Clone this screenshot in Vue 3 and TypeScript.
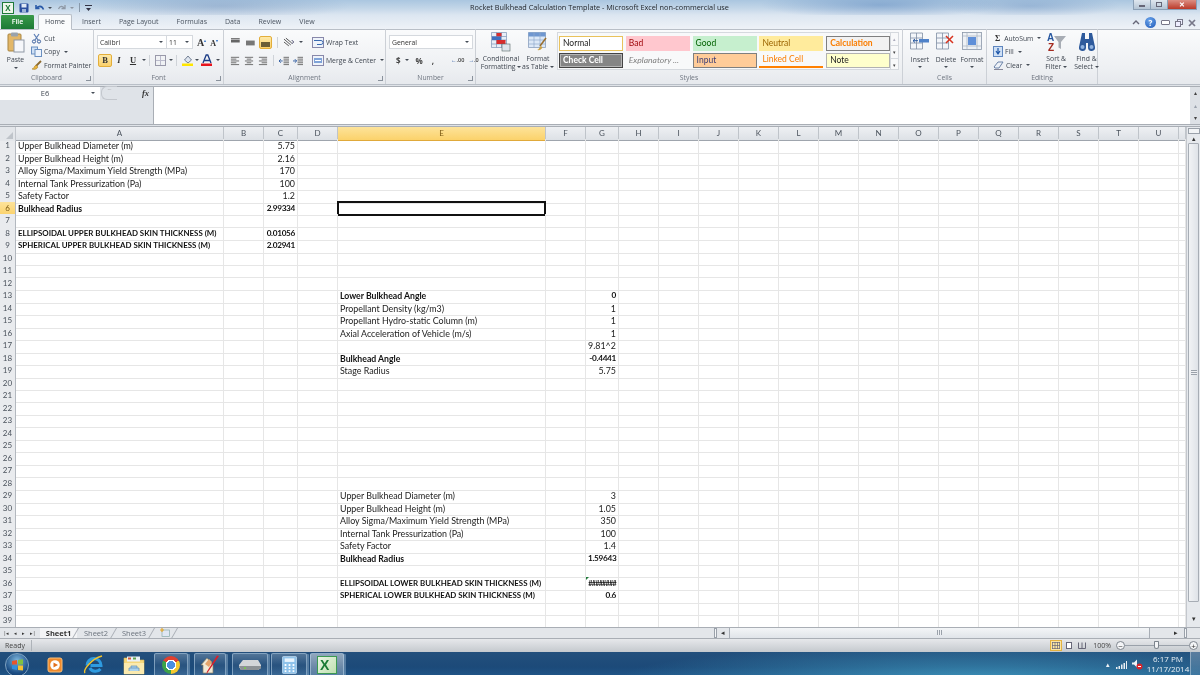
<script setup lang="ts">
const columns = ['A', 'B', 'C', 'D', 'E', 'F', 'G', 'H', 'I', 'J', 'K', 'L', 'M', 'N', 'O', 'P', 'Q', 'R', 'S', 'T', 'U', '']
const rows = Array.from({ length: 39 }, (_, i) => i + 1)
const boldRows = [6, 8, 9, 13, 18, 34, 36, 37]
const capsRows = [8, 9, 36, 37]

const data: Record<string, string> = {
  A1: 'Upper Bulkhead Diameter (m)', C1: '5.75',
  A2: 'Upper Bulkhead Height (m)', C2: '2.16',
  A3: 'Alloy Sigma/Maximum Yield Strength (MPa)', C3: '170',
  A4: 'Internal Tank Pressurization (Pa)', C4: '100',
  A5: 'Safety Factor', C5: '1.2',
  A6: 'Bulkhead Radius', C6: '2.99334',
  A8: 'ELLIPSOIDAL UPPER BULKHEAD SKIN THICKNESS (M)', C8: '0.01056',
  A9: 'SPHERICAL UPPER BULKHEAD SKIN THICKNESS (M)', C9: '2.02941',
  E13: 'Lower Bulkhead Angle', G13: '0',
  E14: 'Propellant Density (kg/m3)', G14: '1',
  E15: 'Propellant Hydro-static Column (m)', G15: '1',
  E16: 'Axial Acceleration of Vehicle (m/s)', G16: '1',
  G17: '9.81^2',
  E18: 'Bulkhead Angle', G18: '-0.4441',
  E19: 'Stage Radius', G19: '5.75',
  E29: 'Upper Bulkhead Diameter (m)', G29: '3',
  E30: 'Upper Bulkhead Height (m)', G30: '1.05',
  E31: 'Alloy Sigma/Maximum Yield Strength (MPa)', G31: '350',
  E32: 'Internal Tank Pressurization (Pa)', G32: '100',
  E33: 'Safety Factor', G33: '1.4',
  E34: 'Bulkhead Radius', G34: '1.59643',
  E36: 'ELLIPSOIDAL LOWER BULKHEAD SKIN THICKNESS (M)', G36: '########',
  E37: 'SPHERICAL LOWER BULKHEAD SKIN THICKNESS (M)', G37: '0.6',
}

function cellClass(col: string, row: number) {
  const key = col + row
  return {
    bold: boldRows.includes(row),
    caps: capsRows.includes(row) && (col === 'A' || col === 'E'),
    right: (col === 'C' || col === 'G') && key !== 'G17',
    selected: key === 'E6',
    flagged: key === 'G36',
  }
}

const tabs = ['Insert', 'Page Layout', 'Formulas', 'Data', 'Review', 'View']
const styleCells = [
  { name: 'Normal', cls: 'st-normal' },
  { name: 'Bad', cls: 'st-bad' },
  { name: 'Good', cls: 'st-good' },
  { name: 'Neutral', cls: 'st-neutral' },
  { name: 'Calculation', cls: 'st-calc' },
  { name: 'Check Cell', cls: 'st-check' },
  { name: 'Explanatory ...', cls: 'st-expl' },
  { name: 'Input', cls: 'st-input' },
  { name: 'Linked Cell', cls: 'st-linked' },
  { name: 'Note', cls: 'st-note' },
]
</script>

<template>
  <div class="window">
    <!-- title bar -->
    <div class="titlebar">
      <div class="qat">
        <span class="xl-mini">X</span>
        <svg width="10" height="10" viewBox="0 0 10 10"><rect x=".5" y=".5" width="9" height="9" rx="1" fill="#2b4f9e" /><rect x="2.5" y="1" width="5" height="3.5" fill="#dfe8f5" /><rect x="3" y="6" width="4" height="3.5" fill="#9db4d8" /></svg>
        <svg width="11" height="10" viewBox="0 0 11 10"><path d="M2 2v3.5h3.5M2.5 5.500C4 2.500 8 2.500 9.500 6.500" fill="none" stroke="#2a5aa8" stroke-width="1.600" /></svg>
        <i class="caret dark"></i>
        <svg width="10" height="10" viewBox="0 0 10 10"><path d="M8 2v3.500H4.500M7.500 5.500C6 2.500 3 2.500 1.500 6" fill="none" stroke="#8e98a5" stroke-width="1.300" /></svg>
        <i class="caret"></i>
        <span class="qat-sep"></span>
        <svg width="7" height="8" viewBox="0 0 7 8"><rect y="1" width="7" height="1" fill="#334" /><path d="M1 4h5L3.500 7z" fill="#334" /></svg>
      </div>
      <div class="title">Rocket Bulkhead Calculation Template - Microsoft Excel non-commercial use</div>
      <div class="winctl">
        <span class="wc"><i class="wc-min"></i></span>
        <span class="wc"><i class="wc-max"></i></span>
        <span class="wc wc-close">✕</span>
      </div>
    </div>

    <!-- ribbon tabs -->
    <div class="tabs">
      <div class="tab-file">File</div>
      <div class="tab-home">Home</div>
      <div v-for="t in tabs" :key="t" class="tab">{{ t }}</div>
      <div class="help">
        <svg width="8" height="7" viewBox="0 0 8 7"><path d="M1 5l3-3 3 3" fill="none" stroke="#667" stroke-width="1.400" /></svg>
        <span class="help-q">?</span>
        <i class="mdi-min"></i>
        <svg width="8" height="8" viewBox="0 0 8 8"><rect x="2.500" y=".5" width="5" height="5" fill="#eef" stroke="#778" /><rect x=".5" y="2.500" width="5" height="5" fill="#eef" stroke="#778" /></svg>
        <svg width="8" height="8" viewBox="0 0 8 8"><path d="M1 1l6 6M7 1L1 7" stroke="#778" stroke-width="1.700" /></svg>
      </div>
    </div>

    <!-- ribbon -->
    <div class="ribbon">
      <section class="group g-clip">
        <div class="body">
          <div class="big paste">
            <svg width="18" height="21" viewBox="0 0 18 21"><rect x="1" y="2" width="13" height="17" rx="1" fill="#e3b768" stroke="#a98540" /><rect x="4" y=".5" width="7" height="4" rx="1" fill="#9aa3ad" /><rect x="7" y="8" width="10" height="12" fill="#f6f7fa" stroke="#8f98a5" /></svg>
            <span>Paste</span>
            <i class="caret dark"></i>
          </div>
          <div class="stack">
            <div class="small">
              <svg width="11" height="11" viewBox="0 0 11 11"><path d="M3 1l4 6M8 1L4 7" stroke="#5d7fb5" stroke-width="1.200" /><circle cx="3" cy="8.500" r="1.600" fill="none" stroke="#3a5f9c" /><circle cx="8" cy="8.500" r="1.600" fill="none" stroke="#3a5f9c" /></svg>
              Cut
            </div>
            <div class="small">
              <svg width="11" height="11" viewBox="0 0 11 11"><rect x=".5" y="1" width="6" height="7" fill="#cfe0f5" stroke="#6a8fc0" /><rect x="4" y="3.500" width="6.500" height="7" fill="#eef4fc" stroke="#6a8fc0" /></svg>
              Copy <i class="caret dark"></i>
            </div>
            <div class="small">
              <svg width="11" height="11" viewBox="0 0 11 11"><path d="M5 6l5-5" stroke="#8d6a2f" stroke-width="1.800" /><path d="M1 9c2 0 2-3 4-4l2 2c-1 2-3 3-6 2z" fill="#e8b33f" stroke="#9b7620" stroke-width=".5" /></svg>
              Format Painter
            </div>
          </div>
        </div>
        <div class="label">Clipboard<i class="launcher"></i></div>
      </section>

      <section class="group g-font">
        <div class="body col">
          <div class="line">
            <div class="select font-name">Calibri<i class="caret dark"></i></div>
            <div class="select font-size">11<i class="caret dark"></i></div>
            <span class="grow-a">A<sup>▴</sup></span>
            <span class="grow-a small-a">A<sup>▾</sup></span>
          </div>
          <div class="line tight">
            <span class="fb active"><b>B</b></span>
            <span class="fb"><b><em>I</em></b></span>
            <span class="fb"><b><u>U</u></b></span><i class="caret dark c2"></i>
            <span class="vsep"></span>
            <svg width="11" height="11" viewBox="0 0 11 11"><rect x=".5" y=".5" width="10" height="10" fill="none" stroke="#99a" /><path d="M5.500 1v9M1 5.500h9" stroke="#bbc" /></svg>
            <i class="caret dark c3"></i>
            <span class="vsep"></span>
            <svg width="12" height="12" viewBox="0 0 12 12"><path d="M2.500 6l3.500-4 3.500 4-3.500 3z" fill="#dfe6f0" stroke="#56657c" stroke-width=".8" /><rect y="9.500" width="11" height="2.500" fill="#ffe600" /></svg>
            <i class="caret dark c1"></i>
            <svg width="12" height="12" viewBox="0 0 12 12"><path d="M2 9l3.200-8h1.600L10 9M3.500 6.500h5" fill="none" stroke="#1b3c86" stroke-width="1.300" /><rect y="9.500" width="11" height="2.500" fill="#e8141c" /></svg>
            <i class="caret dark c3"></i>
          </div>
        </div>
        <div class="label">Font<i class="launcher"></i></div>
      </section>

      <section class="group g-align">
        <div class="body">
          <div class="align-left col">
            <div class="line icons">
              <svg width="11" height="11" viewBox="0 0 11 11"><path d="M1 1.500h9" stroke="#666" /><path d="M1 2.500h9v3H1z" fill="#666" /></svg>
              <svg width="11" height="11" viewBox="0 0 11 11"><path d="M1 3.500h9v5H1z" fill="#777" /></svg>
              <span class="al-active"><svg width="11" height="11" viewBox="0 0 11 11"><path d="M1 5h9v5H1z" fill="#6b5d35" /></svg></span>
              <span class="vsep"></span>
              <svg width="12" height="11" viewBox="0 0 12 11"><path d="M1 2l7 6M1 5l5 4M3 1l6 5" stroke="#555" /><path d="M9 3l2 2-2 2" fill="none" stroke="#446" /></svg>
              <i class="caret dark"></i>
            </div>
            <div class="line icons">
              <svg width="11" height="11" viewBox="0 0 11 11"><path d="M1 2h9M1 4h6M1 6h9M1 8h6M1 10h9" stroke="#666" /></svg>
              <svg width="11" height="11" viewBox="0 0 11 11"><path d="M1 2h9M3 4h5M1 6h9M3 8h5M1 10h9" stroke="#666" /></svg>
              <svg width="11" height="11" viewBox="0 0 11 11"><path d="M1 2h9M4 4h6M1 6h9M4 8h6M1 10h9" stroke="#666" /></svg>
              <span class="vsep"></span>
              <svg width="11" height="11" viewBox="0 0 11 11"><path d="M5 2h6M5 4h6M5 6h6M5 8h6M5 10h6" stroke="#666" /><path d="M4 6H0M2 4L0 6l2 2" fill="none" stroke="#2c5aa0" /></svg>
              <svg width="11" height="11" viewBox="0 0 11 11"><path d="M5 2h6M5 4h6M5 6h6M5 8h6M5 10h6" stroke="#666" /><path d="M0 6h4M2 4l2 2-2 2" fill="none" stroke="#2c5aa0" /></svg>
            </div>
          </div>
          <div class="align-right col">
            <div class="small">
              <svg width="12" height="11" viewBox="0 0 12 11"><rect x=".5" y=".5" width="11" height="10" fill="#eef3fa" stroke="#88a" /><path d="M2 3.500h7a2 2 0 010 4H5" fill="none" stroke="#3a6ab0" /></svg>
              Wrap Text
            </div>
            <div class="small">
              <svg width="12" height="11" viewBox="0 0 12 11"><rect x=".5" y=".5" width="11" height="10" fill="#eef3fa" stroke="#88a" /><rect x="2" y="3" width="8" height="5" fill="#7fa3d8" /><path d="M3 5.500h6" stroke="#fff" /></svg>
              Merge &amp; Center <i class="caret dark"></i>
            </div>
          </div>
        </div>
        <div class="label">Alignment<i class="launcher"></i></div>
      </section>

      <section class="group g-num">
        <div class="body col">
          <div class="line"><div class="select num-fmt">General<i class="caret dark"></i></div></div>
          <div class="line num-row">
            <b>$</b><i class="caret dark"></i>
            <b class="pct">%</b>
            <b class="comma">,</b>
            <span class="vsep"></span>
            <span class="dec"><em>←</em>.00</span>
            <span class="dec"><em>→</em>.0</span>
          </div>
        </div>
        <div class="label">Number<i class="launcher"></i></div>
      </section>

      <section class="group g-styles">
        <div class="body">
          <div class="big cf">
            <svg width="20" height="20" viewBox="0 0 20 20"><path d="M.5 .5h15v15H.5zM.5 4.500h15M.5 8h15M.5 12h15M5.500 .5v15M10.500 .5v15" fill="#e8eef7" stroke="#7d93b5" stroke-width=".7" /><rect x="5.500" y="1" width="5" height="3.500" fill="#d82c2c" /><rect x="5.500" y="8" width="9" height="4" fill="#d82c2c" /><rect x="1" y="4.500" width="9" height="3.500" fill="#3f6fc0" /><rect x="11" y="12" width="8" height="7" fill="#dfe5ec" stroke="#566" stroke-width=".6" /></svg>
            <span>Conditional<br />Formatting <i class="caret dark"></i></span>
          </div>
          <div class="big ft">
            <svg width="20" height="20" viewBox="0 0 20 20"><path d="M.5 .5h17v15H.5z" fill="#dce8f7" stroke="#7d93b5" stroke-width=".7" /><rect x=".5" y=".5" width="17" height="4" fill="#6f97d0" /><path d="M.5 8h17M.5 12h17M6 .5v15M12 .5v15" stroke="#8fa9cc" stroke-width=".7" /><path d="M18 6l-6 8" stroke="#9a6f30" stroke-width="1.600" /><path d="M9 18c2 0 2-3 4-4l1.500 1.500c-1 2-3 3-5.500 2.500z" fill="#caa044" /></svg>
            <span>Format<br />as Table <i class="caret dark"></i></span>
          </div>
          <div class="gallery">
            <div class="gallery-grid">
              <div v-for="s in styleCells" :key="s.name" class="style-cell" :class="s.cls">{{ s.name }}</div>
            </div>
            <div class="gallery-scroll">
              <span class="off">▴</span><span>▾</span><span class="more">▾</span>
            </div>
          </div>
        </div>
        <div class="label">Styles</div>
      </section>

      <section class="group g-cells">
        <div class="body">
          <div class="big cell-btn">
            <svg width="20" height="18" viewBox="0 0 20 18"><path d="M.5 1h12v16H.5zM.5 6h12M.5 11h12M6.500 1v16" fill="#f3f6fa" stroke="#7f8ea3" stroke-width=".8" /><rect x="9" y="7" width="10" height="3.500" fill="#4f82c9" /><path d="M8 8.700H3M5 7L3 8.700 5 10.500" fill="none" stroke="#2858a0" /></svg>
            <span>Insert</span><i class="caret dark"></i>
          </div>
          <div class="big cell-btn">
            <svg width="20" height="18" viewBox="0 0 20 18"><path d="M.5 1h12v16H.5zM.5 6h12M.5 11h12M6.500 1v16" fill="#f3f6fa" stroke="#7f8ea3" stroke-width=".8" /><path d="M10 4l7 7M17 4l-7 7" stroke="#d8331f" stroke-width="1.500" /></svg>
            <span>Delete</span><i class="caret dark"></i>
          </div>
          <div class="big cell-btn">
            <svg width="20" height="18" viewBox="0 0 20 18"><rect x=".5" y=".5" width="19" height="17" fill="#eef1f5" stroke="#8a97a8" stroke-width=".8" /><path d="M5 .5v17M15 .5v17M.5 4h19M.5 14h19" stroke="#a5b0bf" stroke-width=".7" /><rect x="6" y="5" width="8" height="8" fill="#5f8fd8" /></svg>
            <span>Format</span><i class="caret dark"></i>
          </div>
        </div>
        <div class="label">Cells</div>
      </section>

      <section class="group g-edit">
        <div class="body">
          <div class="stack edit-stack">
            <div class="small"><b class="sigma">Σ</b> AutoSum <i class="caret dark"></i></div>
            <div class="small">
              <svg width="10" height="11" viewBox="0 0 10 11"><rect x=".5" y=".5" width="9" height="10" fill="#cfe0f5" stroke="#5f86bf" /><path d="M5 2v5M3 5l2 3 2-3" fill="none" stroke="#1e56a8" stroke-width="1.200" /></svg>
              Fill <i class="caret dark"></i>
            </div>
            <div class="small">
              <svg width="11" height="10" viewBox="0 0 11 10"><path d="M1 7l4-5h5L6 8H2z" fill="#edf1f7" stroke="#6a82a8" /><path d="M1 9.500h9" stroke="#889" /></svg>
              Clear <i class="caret dark"></i>
            </div>
          </div>
          <div class="big sort">
            <svg width="20" height="20" viewBox="0 0 20 20"><path d="M8 4h12l-5 6v7l-2.500-1.500V10z" fill="#a8adb5" /><text x="1" y="9" font-family="Liberation Sans" font-size="10" font-weight="700" fill="#2858a0">A</text><text x="2" y="19" font-family="Liberation Sans" font-size="10" font-weight="700" fill="#a32a20">Z</text></svg>
            <span>Sort &amp;<br />Filter <i class="caret dark"></i></span>
          </div>
          <div class="big find">
            <svg width="20" height="20" viewBox="0 0 20 20"><path d="M5 1h3v6h4V1h3l3 14a3.500 3.500 0 01-7 1V11H9v5a3.500 3.500 0 01-7-1z" fill="#2e5a9c" /><circle cx="5.500" cy="15" r="2" fill="#8fb2e0" /><circle cx="14.500" cy="15" r="2" fill="#8fb2e0" /></svg>
            <span>Find &amp;<br />Select <i class="caret dark"></i></span>
          </div>
        </div>
        <div class="label">Editing</div>
      </section>
    </div>

    <!-- formula bar -->
    <div class="formula">
      <div class="namebox-wrap">
        <div class="namebox"><span>E6</span><i class="caret dark"></i></div>
        <div class="fx-area"><span class="fx-pill">⌒</span><em>fx</em></div>
      </div>
      <div class="formula-input"></div>
      <div class="formula-scroll"><span>▴</span><span class="off">▴</span><span>▾</span></div>
    </div>

    <!-- sheet -->
    <div class="sheet-wrap">
      <div class="sheet">
        <div class="sheet-row head">
          <div class="corner"><i></i></div>
          <div v-for="c in columns" :key="c" class="col-head" :class="{ on: c === 'E' }">{{ c }}</div>
        </div>
        <div v-for="r in rows" :key="r" class="sheet-row">
          <div class="row-head" :class="{ on: r === 6 }">{{ r }}</div>
          <div v-for="c in columns" :key="c" class="cell" :class="cellClass(c, r)">{{ data[c + r] }}</div>
        </div>
      </div>
      <div class="vscroll">
        <i class="split-h"></i>
        <span class="arrow">▴</span>
        <div class="vthumb"><i></i></div>
        <span class="arrow down">▾</span>
      </div>
    </div>

    <!-- sheet tabs and horizontal scrollbar -->
    <div class="tabbar">
      <div class="nav"><span>|◂</span><span>◂</span><span>▸</span><span>▸|</span></div>
      <div class="sheet-tab current">Sheet1</div>
      <div class="sheet-tab">Sheet2</div>
      <div class="sheet-tab">Sheet3</div>
      <div class="sheet-tab new">
        <svg width="10" height="9" viewBox="0 0 10 9"><rect x="2" y="2" width="7.500" height="6.500" fill="#dfe7f3" stroke="#8aa" stroke-width=".7" /><path d="M0 2h4M2 0v4" stroke="#e6a92f" stroke-width="1.200" /></svg>
      </div>
      <div class="tab-fill"></div>
      <i class="hsplit"></i>
      <span class="harrow">◂</span>
      <div class="hthumb"><i></i></div>
      <span class="harrow right">▸</span>
      <i class="hsplit end"></i>
    </div>

    <!-- status bar -->
    <div class="status">
      <span class="ready">Ready</span>
      <div class="status-right">
        <span class="view on"><svg width="8" height="7" viewBox="0 0 8 7"><path d="M0 .5h8M0 3.500h8M0 6.500h8M.5 0v7M3 0v7M5.500 0v7M7.500 0v7" stroke="#667" stroke-width=".7" /></svg></span>
        <span class="view"><svg width="8" height="7" viewBox="0 0 8 7"><rect x="1.500" y=".5" width="5" height="6" fill="#fff" stroke="#667" /></svg></span>
        <span class="view"><svg width="8" height="7" viewBox="0 0 8 7"><path d="M.5 .5v6h7v-6M4 .5v6" fill="none" stroke="#667" /></svg></span>
        <span class="zoom-pct">100%</span>
        <span class="zoom-btn">−</span>
        <div class="slider"><i></i></div>
        <span class="zoom-btn">+</span>
      </div>
    </div>

    <!-- windows taskbar -->
    <div class="taskbar">
      <div class="orb">
        <svg width="13" height="12" viewBox="0 0 13 12"><path d="M1 2l5-1v4.500H1z" fill="#e8552b" /><path d="M7 1l5-.8v5.300H7z" fill="#7fc241" /><path d="M1 6.500h5V11l-5-1z" fill="#2f8fe0" /><path d="M7 6.500h5v5L7 11z" fill="#f5c231" /></svg>
      </div>
      <div class="pin p-media">
        <svg width="16" height="16" viewBox="0 0 16 16"><rect x="1" y="1" width="14" height="14" rx="2" fill="#ef8a2c" stroke="#f9c07a" /><circle cx="8" cy="8" r="4.800" fill="#fff" /><path d="M6.500 5.500L11 8l-4.500 2.500z" fill="#e2701c" /></svg>
      </div>
      <div class="pin p-ie">
        <svg width="22" height="21" viewBox="0 0 22 21"><path d="M4 11.500a7 7 0 1114 0H7.500M6.800 14a6.500 6.500 0 0010.700 1" fill="none" stroke="#2e9be0" stroke-width="3" /><path d="M2 19c-2-3 6-14 17-17" fill="none" stroke="#f3c32a" stroke-width="1.400" /></svg>
      </div>
      <div class="pin p-folder">
        <svg width="22" height="20" viewBox="0 0 22 20"><path d="M1 3h7l2 2h11v14H1z" fill="#f4d77c" stroke="#d9b353" stroke-width=".6" /><rect x="4" y="1.500" width="13" height="5" fill="#eaf0f5" /><rect x="5" y="2.500" width="3" height="2" fill="#d25a3a" /><rect x="10" y="2.500" width="3" height="2" fill="#5fa14e" /><path d="M1 8h20v11H1z" fill="#fbeaae" /><path d="M6 16v-3h10v3M8 13v-2h6v2" fill="#a9d2ee" stroke="#5b8db5" stroke-width=".7" /></svg>
      </div>
      <div class="task-btn b-chrome"><span class="chrome"></span></div>
      <div class="task-btn b-paint">
        <svg width="20" height="20" viewBox="0 0 20 20"><path d="M1 10l6-7 6 7v8H3v-8z" fill="#f1e9d4" stroke="#8b7f66" stroke-width=".7" /><path d="M5 9l4-5 3 3-3 5z" fill="#e5a46c" /><path d="M19 1L8 17l-1.500 2L7 16.500 17 .5z" fill="#d8202a" /></svg>
      </div>
      <div class="task-btn b-drive">
        <svg width="24" height="12" viewBox="0 0 24 12"><path d="M5 1h15l3 5v3l-3 2H3L1 8V6z" fill="#d3d6d9" /><path d="M1 7h22v2l-3 2H3z" fill="#8d9296" /><circle cx="7" cy="9" r="1" fill="#76d142" /></svg>
      </div>
      <div class="task-btn b-calc">
        <svg width="15" height="18" viewBox="0 0 17 20"><rect x=".5" y=".5" width="16" height="19" rx="1" fill="#8ec2ea" stroke="#dbeeff" stroke-width=".7" /><rect x="3" y="2.500" width="11" height="4" fill="#e9f4fd" /><path d="M3 9h2v2H3zM7.500 9h2v2h-2zM12 9h2v2h-2zM3 12.500h2v2H3zM7.500 12.500h2v2h-2zM12 12.500h2v2h-2zM3 16h2v2H3zM7.500 16h2v2h-2zM12 16h2v2h-2z" fill="#fbfdff" /></svg>
      </div>
      <div class="task-btn b-excel">
        <span class="xl-big"><b>X</b></span>
      </div>
      <div class="tray">
        <span class="tray-up">▴</span>
        <svg width="11" height="8" viewBox="0 0 11 8"><path d="M0 6h1.500v2H0zM2.500 5H4v3H2.500zM5 3.500h1.500V8H5zM7.500 2H9v6H7.500zM10 0h1v8h-1z" fill="#e8eef3" /></svg>
        <svg width="12" height="11" viewBox="0 0 12 11"><path d="M1 3.500h2L6 .5v8l-3-3H1z" fill="#eef2f6" /><circle cx="8.500" cy="7.500" r="3" fill="#d8232a" /><path d="M7 7.500h3" stroke="#fff" /></svg>
        <div class="clock"><span>6:17 PM</span><span>11/17/2014</span></div>
        <i class="show-desktop"></i>
      </div>
    </div>
  </div>
</template>

<style scoped>
.window {
  width: 1200px;
  height: 675px;
  display: flex;
  flex-direction: column;
  overflow: hidden;
  background: #dfe3e8;
  font-family: "Open Sans", "Noto Sans", sans-serif;
  font-size: 6.800px;
  color: #3f4650;
  filter: blur(.3px);
}
i { font-style: normal; display: inline-block; }

.caret {
  width: 0;
  height: 0;
  border-left: 2px solid transparent;
  border-right: 2px solid transparent;
  border-top: 2px solid #8d96a1;
  vertical-align: middle;
}
.caret.dark { border-top-color: #454c56; }

/* title */
.titlebar {
  height: 15px;
  flex: none;
  display: flex;
  align-items: center;
  position: relative;
  background:
    radial-gradient(ellipse 130px 14px at 220px 6px, rgba(120, 150, 190, .45), transparent),
    radial-gradient(ellipse 120px 14px at 880px 5px, rgba(90, 135, 190, .5), transparent),
    radial-gradient(ellipse 90px 12px at 1030px 6px, rgba(100, 140, 190, .4), transparent),
    linear-gradient(180deg, #aac6e0 0, #c3d6e8 55%, #dce6f1 100%);
}
.qat { display: flex; align-items: center; gap: 5px; padding-left: 2px; }
.qat .caret { margin-left: -2px; }
.xl-mini {
  width: 10px;
  height: 10px;
  background: #eef6ea;
  border: 1px solid #1f7a3a;
  color: #1f7a3a;
  font-size: 8px;
  font-weight: 700;
  line-height: 9px;
  text-align: center;
}
.qat-sep { width: 1px; height: 9px; background: #8899aa; }
.title {
  position: absolute;
  left: 470px;
  top: 2px;
  font-size: 7.300px;
  color: #20252b;
  white-space: nowrap;
}
.winctl { position: absolute; right: 3px; top: 0; display: flex; }
.wc {
  width: 18px;
  height: 10px;
  border: 1px solid #8ba0b6;
  border-top: 0;
  background: linear-gradient(180deg, #dfe7ef, #b4c4d4);
  display: flex;
  align-items: center;
  justify-content: center;
  margin-left: -1px;
  box-sizing: border-box;
}
.wc-close {
  width: 30px;
  background: linear-gradient(180deg, #dc8f83, #bb3a2a);
  color: #fff;
  font-size: 7px;
  font-weight: 700;
}
.wc-min { width: 6px; height: 2px; background: #fff; border: 1px solid #667; margin-top: 3px; box-sizing: border-box; }
.wc-max { width: 6px; height: 5px; background: transparent; border: 1px solid #667; box-sizing: border-box; }

/* tabs */
.tabs {
  height: 14px;
  flex: none;
  display: flex;
  align-items: flex-end;
  position: relative;
  background: linear-gradient(180deg, #dce6f1, #eef2f7);
  border-bottom: 1px solid #b9bfc7;
  box-sizing: content-box;
  margin-bottom: -1px;
  font-size: 7px;
}
.tab-file {
  width: 33px;
  height: 14px;
  margin-left: 1px;
  background: linear-gradient(180deg, #399a4a, #1d7a36);
  color: #fff;
  font-weight: 600;
  text-align: center;
  line-height: 14px;
  border-radius: 1px 1px 0 0;
}
.tab-home {
  width: 32px;
  height: 14px;
  margin: 0 10px -1px 4px;
  background: #fafbfc;
  border: 1px solid #b9bfc7;
  border-bottom-color: #fafbfc;
  box-sizing: content-box;
  text-align: center;
  line-height: 14px;
  border-radius: 2px 2px 0 0;
}
.tab { margin-right: 18px; line-height: 14px; color: #4b5460; }
.help { position: absolute; right: 4px; top: 2px; display: flex; align-items: center; gap: 5px; }
.help-q {
  width: 11px;
  height: 11px;
  border-radius: 50%;
  background: radial-gradient(circle at 40% 30%, #6aa4ea, #1d58b8);
  color: #fff;
  font-weight: 700;
  font-size: 8px;
  line-height: 11px;
  text-align: center;
}
.mdi-min { width: 7px; height: 3px; background: #fff; border: 1px solid #778; border-radius: 1px; }

/* ribbon */
.ribbon {
  height: 55px;
  flex: none;
  display: flex;
  background: linear-gradient(180deg, #fafbfc, #eef0f3 70%, #e6e9ed);
  border-bottom: 1px solid #b9bfc7;
  box-sizing: content-box;
}
.group {
  display: flex;
  flex-direction: column;
  position: relative;
  border-right: 1px solid #ccd0d6;
  box-sizing: border-box;
}
.g-clip { width: 94px; }
.g-font { width: 130px; }
.g-align { width: 162px; }
.g-num { width: 90px; }
.g-styles { width: 427px; }
.g-cells { width: 84px; }
.g-edit { width: 111px; }
.body { flex: 1; display: flex; min-height: 0; }
.col { flex-direction: column; display: flex; }
.label {
  height: 12px;
  flex: none;
  text-align: center;
  line-height: 12px;
  color: #6f7680;
  position: relative;
}
.launcher {
  position: absolute;
  right: 2px;
  top: 4px;
  width: 4px;
  height: 4px;
  border-right: 1px solid #8a929c;
  border-bottom: 1px solid #8a929c;
}
.big {
  display: flex;
  flex-direction: column;
  align-items: center;
  text-align: center;
  line-height: 8px;
  padding-top: 3px;
  box-sizing: border-box;
  gap: 2px;
}
.stack { display: flex; flex-direction: column; padding-top: 2.500px; }
.small {
  height: 13.500px;
  display: flex;
  align-items: center;
  gap: 2px;
  white-space: nowrap;
}
.small .caret { margin-left: 2px; }

.paste { width: 31px; padding-top: 3px; }
.paste span { margin-top: 1px; }
.paste .caret { margin-top: 1px; }

.g-font .body { padding: 6px 0 0 3px; }
.line { display: flex; align-items: center; height: 14px; }
.line.tight { margin-top: 4px; padding-left: 1px; }
.line.tight > svg { margin-left: 2px; }
.c1 { margin-left: 1px; }
.c2 { margin-left: 2px; }
.c3 { margin-left: 3px; }
.select {
  height: 14px;
  background: #fff;
  border: 1px solid #d5d9de;
  box-sizing: border-box;
  display: flex;
  align-items: center;
  justify-content: space-between;
  padding: 0 3px 0 2px;
  color: #333;
}
.font-name { width: 70px; }
.font-size { width: 27px; margin-left: -1px; }
.grow-a { font-family: "Liberation Serif", serif; font-size: 10px; font-weight: 700; color: #333; margin-left: 4px; line-height: 10px; }
.grow-a sup { font-size: 4px; color: #3b78c7; }
.small-a { font-size: 8px; margin-left: 4px; }
.fb {
  width: 14px;
  height: 13px;
  display: flex;
  align-items: center;
  justify-content: center;
  font-family: "Liberation Serif", serif;
  font-size: 8.500px;
  color: #333;
  box-sizing: border-box;
}
.fb.active, .al-active {
  background: linear-gradient(180deg, #fde9a8, #fbd06b);
  border: 1px solid #e3ae3a;
  border-radius: 2px;
}
.vsep { width: 1px; height: 11px; background: #cfd3d8; margin: 0 3px; }

.g-align .body { padding: 6px 0 0 6px; gap: 9px; }
.align-left { width: 73px; }
.line.icons { gap: 4px; }
.line.icons + .line.icons { margin-top: 4px; }
.line.icons .vsep { margin: 0 1px; }
.al-active { width: 13px; height: 13px; display: flex; align-items: center; justify-content: center; box-sizing: border-box; }
.align-right .small { height: 14px; }
.align-right .small + .small { margin-top: 4px; }

.g-num .body { padding: 6px 0 0 3px; }
.num-fmt { width: 84px; }
.num-row { margin-top: 4px; gap: 4px; padding-left: 7px; font-size: 8px; color: #444; }
.num-row .vsep { margin: 0 2px; }
.pct { margin-left: 3px; }
.comma { margin: 0 5px; }
.dec { font-size: 5.500px; font-weight: 600; color: #444; white-space: nowrap; }
.dec em { font-style: normal; color: #2c5aa0; }

.cf { width: 44px; margin-left: 3px; }
.ft { width: 34px; margin-left: -2px; }
.cf span, .ft span, .sort span, .find span { margin-top: 1px; white-space: nowrap; }
.gallery {
  width: 342px;
  height: 38px;
  margin: 3px 0 0 2px;
  border: 1px solid #d5d9de;
  background: #f8f9fa;
  display: flex;
  box-sizing: border-box;
}
.gallery-grid {
  flex: 1;
  display: grid;
  grid-template-columns: repeat(5, 64px);
  grid-auto-rows: 15px;
  column-gap: 2.800px;
  row-gap: 2.500px;
  padding: 2.500px 0 0 1px;
  font-family: Lato, "Open Sans", sans-serif;
  font-size: 8.500px;
}
.style-cell {
  box-sizing: border-box;
  padding-left: 3px;
  line-height: 14px;
  white-space: nowrap;
  overflow: hidden;
}
.st-normal { background: #fff; border: 1px solid #e9c25c; color: #222; line-height: 13px; }
.st-bad { background: #ffc7ce; color: #9c0006; }
.st-good { background: #c6efce; color: #006100; }
.st-neutral { background: #ffeb9c; color: #9c6500; }
.st-calc { background: #f2f2f2; border: 1px solid #7f7f7f; color: #fa7d00; font-weight: 700; line-height: 13px; }
.st-check { background: #858585; border: 1px solid #444; box-shadow: inset 0 0 0 1px #b5b5b5; color: #fff; font-weight: 700; line-height: 13px; }
.st-expl { color: #7f7f7f; font-style: italic; }
.st-input { background: #ffcc99; border: 1px solid #7f7f7f; color: #3f3f76; line-height: 13px; }
.st-linked { color: #fa7d00; border-bottom: 2px solid #ff8001; line-height: 13px; }
.st-note { background: #ffffcc; border: 1px solid #b2b2b2; color: #222; line-height: 13px; }
.gallery-scroll {
  width: 8px;
  display: flex;
  flex-direction: column;
  border-left: 1px solid #d5d9de;
  font-size: 5px;
  text-align: center;
  color: #444;
}
.gallery-scroll span { flex: 1; line-height: 12px; border-bottom: 1px solid #d5d9de; }
.gallery-scroll .off { color: #aab; }
.gallery-scroll .more { border-bottom: 0; }

.g-cells .body { padding-left: 6px; gap: 4px; }
.cell-btn { width: 22px; }
.cell-btn span { margin-top: 4px; }
.g-edit .body { padding-left: 6px; }
.edit-stack { width: 50px; }
.sigma { font-size: 8px; color: #333; margin: 0 2px; font-family: "Liberation Serif", serif; }
.sort { width: 32px; }
.find { width: 21px; margin-left: 5px; }

/* formula bar */
.formula {
  height: 39px;
  flex: none;
  margin-top: 1px;
  display: flex;
  background: #dfe3e8;
  border-top: 1px solid #a9aeb5;
  border-bottom: 1px solid #a9aeb5;
  box-sizing: border-box;
}
.namebox-wrap { width: 153px; flex: none; }
.namebox {
  width: 100px;
  height: 12.500px;
  background: #fff;
  display: inline-flex;
  align-items: center;
  justify-content: center;
  position: relative;
  font-size: 7.500px;
  vertical-align: top;
}
.namebox span { margin-right: 10px; }
.namebox .caret { position: absolute; right: 5px; top: 5px; }
.fx-area {
  display: inline-flex;
  width: 53px;
  height: 12.500px;
  align-items: center;
  justify-content: space-between;
  vertical-align: top;
  box-sizing: border-box;
  padding: 0 4px 0 1px;
}
.fx-pill {
  width: 15px;
  height: 12px;
  border: 1px solid #c3c7cd;
  border-radius: 6px 0 0 6px;
  border-right: 0;
  font-size: 5px;
  line-height: 8px;
  color: #999;
  text-align: center;
}
.fx-area em { font-family: "Liberation Serif", serif; font-size: 8.500px; font-weight: 700; color: #333; }
.formula-input { flex: 1; background: #fff; border-left: 1px solid #a9aeb5; }
.formula-scroll {
  width: 10px;
  background: #dde1e6;
  display: flex;
  flex-direction: column;
  justify-content: space-between;
  font-size: 6px;
  line-height: 12px;
  text-align: center;
  color: #444;
}
.formula-scroll .off { color: #9aa2ac; }

/* sheet */
.sheet-wrap {
  flex: none;
  height: 501.500px;
  margin-top: 1px;
  display: flex;
  background: #fff;
  border-top: 1px solid #a9aeb5;
  box-sizing: border-box;
}
.sheet { width: 1186px; flex: none; }
.sheet-row {
  display: grid;
  grid-template-columns: 16px 208px 40px 34px 40px 208px 40px 33px repeat(14, 40px) 7px;
  height: 12.500px;
}
.sheet-row.head { height: 12px; }
.corner {
  background: #e3e6ea;
  border-right: 1px solid #c3c7cd;
  position: relative;
}
.corner i {
  position: absolute;
  right: 2px;
  bottom: 2px;
  width: 0;
  height: 0;
  border-left: 7px solid transparent;
  border-bottom: 7px solid #bfc4ca;
}
.col-head {
  background: linear-gradient(180deg, #eef0f3, #dde1e6);
  border-right: 1px solid #bfc4ca;
  border-bottom: 1px solid #9fa5ad;
  box-sizing: border-box;
  text-align: center;
  font-family: Lato, sans-serif;
  font-size: 8px;
  line-height: 13px;
  color: #4a525c;
}
.col-head.on {
  background: linear-gradient(180deg, #fde39a, #fbd26b);
  border-bottom-color: #e0a93a;
  color: #7b5a14;
}
.row-head {
  background: #e9ebee;
  border-right: 1px solid #b3b8bf;
  border-bottom: 1px solid #cdd1d6;
  box-sizing: border-box;
  text-align: center;
  font-family: Lato, sans-serif;
  font-size: 8px;
  line-height: 13px;
  color: #4a525c;
}
.row-head.on {
  background: linear-gradient(180deg, #fde39a, #fbd26b);
  border-bottom-color: #e0a93a;
  color: #7b5a14;
}
.cell {
  position: relative;
  border-right: 1px solid #e6e6e6;
  border-bottom: 1px solid #e6e6e6;
  box-sizing: border-box;
  padding: 0 2px;
  font-family: Lato, "Open Sans", sans-serif;
  font-size: 8.900px;
  line-height: 13.500px;
  color: #222;
  white-space: nowrap;
}
.cell.bold { font-weight: 700; color: #111; font-size: 8.700px; }
.cell.caps { font-size: 7.900px; }
.cell.right { text-align: right; }
.cell.bold.right { font-size: 8.200px; letter-spacing: -.3px; }
.cell.selected::after {
  content: "";
  position: absolute;
  left: -1px;
  top: -1px;
  right: -1px;
  bottom: -1px;
  border: 2px solid #111;
}
.cell.flagged.bold.right { font-size: 7.200px; letter-spacing: -.7px; }
.cell.flagged::before {
  content: "";
  position: absolute;
  left: 0;
  top: 0;
  border-top: 3px solid #1f7a3a;
  border-right: 3px solid transparent;
}

.vscroll {
  flex: 1;
  background: #e6e9ed;
  border-left: 1px solid #c3c7cd;
  display: flex;
  flex-direction: column;
  align-items: center;
  position: relative;
  font-size: 7px;
  color: #333;
}
.split-h { width: 10px; height: 4px; background: #f2f4f6; border: 1px solid #9aa1aa; margin-top: 1px; }
.arrow { height: 8px; line-height: 8px; margin-top: 1px; }
.arrow.down { margin-top: 13px; }
.vthumb {
  width: 11px;
  height: 459px;
  flex: none;
  background: linear-gradient(90deg, #f1f3f5, #dfe3e8);
  border: 1px solid #a7adb5;
  box-sizing: border-box;
  border-radius: 1px;
  display: flex;
  align-items: center;
  justify-content: center;
}
.vthumb i { width: 6px; height: 5px; background: repeating-linear-gradient(180deg, #9aa1aa 0 1px, #eef0f3 1px 2px); }

/* tab strip */
.tabbar {
  height: 10.500px;
  flex: none;
  display: flex;
  align-items: stretch;
  background: #e3e6ea;
  border-top: 1px solid #a9aeb5;
  border-bottom: 1px solid #a9aeb5;
  box-sizing: content-box;
  margin-bottom: -1px;
  position: relative;
  z-index: 1;
  margin-top: -1px;
}
.nav { width: 40px; display: flex; justify-content: space-around; font-size: 5px; line-height: 10px; color: #333; padding: 0 2px 0 1px; box-sizing: border-box; }
.sheet-tab {
  width: 38px;
  position: relative;
  text-align: center;
  font-family: "Open Sans", sans-serif;
  font-size: 7.500px;
  line-height: 11px;
  color: #6c747e;
}
.sheet-tab::after {
  content: "";
  position: absolute;
  right: 1px;
  top: 0;
  bottom: 0;
  width: 1px;
  background: #a9aeb5;
  transform: skewX(-30deg);
}
.sheet-tab.current {
  width: 37px;
  background: #f3f4f6;
  color: #333;
  font-weight: 700;
}
.sheet-tab.new { width: 23px; }
.tab-fill { flex: 1; }
.hsplit { width: 3px; background: #f5f6f8; border: 1px solid #9aa1aa; box-sizing: border-box; }
.harrow { width: 12px; text-align: center; font-size: 7px; line-height: 9px; color: #333; }
.hthumb {
  width: 421px;
  background: linear-gradient(180deg, #f3f5f7, #e0e4e9);
  border-left: 1px solid #a7adb5;
  border-right: 1px solid #a7adb5;
  box-sizing: border-box;
  display: flex;
  align-items: center;
  justify-content: center;
}
.hthumb i { width: 5px; height: 5px; background: repeating-linear-gradient(90deg, #9aa1aa 0 1px, #eef0f3 1px 2px); }
.harrow.right { width: 34px; text-align: right; padding-right: 6px; box-sizing: border-box; }
.hsplit.end { margin-right: 13px; }

/* status */
.status {
  height: 13px;
  flex: none;
  margin-top: 1px;
  display: flex;
  align-items: center;
  justify-content: space-between;
  background: linear-gradient(180deg, #e6e8eb, #c5c9ce);
  color: #444;
  font-size: 7px;
}
.ready { padding: 0 6px 0 5px; border-right: 1px solid #aeb3b9; line-height: 11px; }
.status-right { display: flex; align-items: center; padding-right: 2px; }
.view {
  width: 12px;
  height: 11px;
  margin-left: 1px;
  display: flex;
  align-items: center;
  justify-content: center;
  box-sizing: border-box;
}
.view.on { background: #fbe6a3; border: 1px solid #e4b240; }
.zoom-pct { margin: 0 5px 0 5px; }
.zoom-btn {
  width: 9px;
  height: 9px;
  border: 1px solid #7d848d;
  border-radius: 50%;
  background: #f4f5f7;
  font-size: 8px;
  line-height: 8px;
  text-align: center;
  box-sizing: border-box;
  color: #333;
}
.slider { width: 64px; height: 1px; background: #9aa1aa; position: relative; }
.slider i {
  position: absolute;
  left: 29px;
  top: -4px;
  width: 5px;
  height: 8px;
  background: #f4f5f7;
  border: 1px solid #7d848d;
  box-sizing: border-box;
  border-radius: 1px 1px 3px 3px;
}

/* taskbar */
.taskbar {
  height: 25px;
  flex: none;
  display: flex;
  align-items: center;
  position: relative;
  background:
    radial-gradient(ellipse 360px 34px at 980px 26px, rgba(70, 165, 200, .7), transparent),
    linear-gradient(180deg, #234f7c, #1c4a79 60%, #215688);
}
.orb {
  width: 24px;
  height: 24px;
  margin-left: 5px;
  flex: none;
  border-radius: 50%;
  background: radial-gradient(circle at 50% 30%, #7eb6dd, #1d4f86 65%, #12345e);
  border: 1px solid #7fa3c2;
  box-sizing: border-box;
  display: flex;
  align-items: center;
  justify-content: center;
}
.pin { display: flex; align-items: center; justify-content: center; flex: none; height: 25px; }
.p-media { width: 20px; margin-left: 16px; }
.p-ie { width: 22px; margin-left: 18px; }
.p-folder { width: 22px; margin-left: 18px; }
.task-btn {
  height: 24px;
  flex: none;
  display: flex;
  align-items: center;
  justify-content: center;
  border: 1px solid rgba(190, 215, 235, .55);
  border-radius: 2px;
  box-sizing: border-box;
  background: linear-gradient(180deg, rgba(255, 255, 255, .22), rgba(255, 255, 255, .05) 50%, rgba(255, 255, 255, .12));
  box-shadow: 3px 0 0 -1px rgba(190, 215, 235, .35);
}
.b-chrome { width: 34px; margin-left: 9px; }
.b-paint { width: 32px; margin-left: 6px; }
.b-drive { width: 36px; margin-left: 6px; }
.b-calc { width: 36px; margin-left: 3px; }
.b-excel {
  width: 34px;
  margin-left: 3px;
  background: linear-gradient(180deg, rgba(255, 255, 255, .5), rgba(255, 255, 255, .25));
}
.chrome {
  width: 18px;
  height: 18px;
  border-radius: 50%;
  background:
    radial-gradient(circle, #4a8fe0 0 30%, #fff 31% 42%, transparent 43%),
    conic-gradient(#e0402f 0 60deg, #f5c92e 60deg 180deg, #3da24a 180deg 300deg, #e0402f 300deg 360deg);
}
.xl-big {
  width: 20px;
  height: 18px;
  background: linear-gradient(135deg, #eaf5e4, #bfe0b0);
  border: 1px solid #3c9a52;
  box-sizing: border-box;
  color: #1a7a35;
  font-family: "Liberation Sans", sans-serif;
  font-size: 14px;
  line-height: 16px;
  text-align: left;
  padding-left: 2px;
}
.tray {
  margin-left: auto;
  display: flex;
  align-items: center;
  gap: 4px;
  color: #eef3f7;
  height: 25px;
}
.tray-up { font-size: 7px; margin-right: 2px; }
.clock {
  display: flex;
  flex-direction: column;
  align-items: center;
  width: 42px;
  margin-top: -1px;
  font-size: 8px;
  line-height: 10.500px;
  color: #e9f0f5;
}
.show-desktop {
  width: 9px;
  height: 25px;
  background: linear-gradient(180deg, rgba(255, 255, 255, .25), rgba(255, 255, 255, .08));
  border-left: 1px solid rgba(255, 255, 255, .35);
  margin-left: -3px;
}
</style>

<style>
html, body { margin: 0; padding: 0; background: #dfe3e8; }
</style>
